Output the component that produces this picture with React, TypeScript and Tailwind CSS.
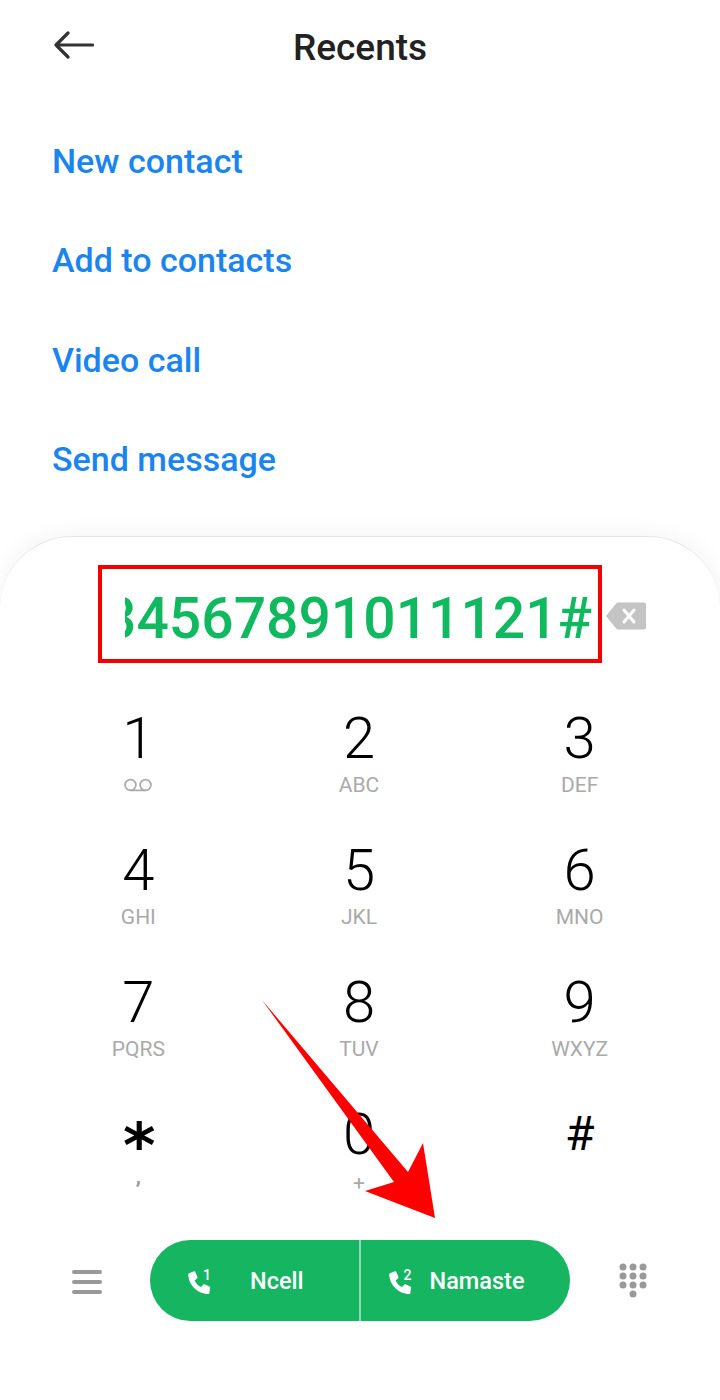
const actions = ["New contact", "Add to contacts", "Video call", "Send message"];

const keys = [
  { digit: "1", sub: "voicemail", digitClass: "", subClass: "" },
  { digit: "2", sub: "ABC", digitClass: "", subClass: "" },
  { digit: "3", sub: "DEF", digitClass: "", subClass: "" },
  { digit: "4", sub: "GHI", digitClass: "", subClass: "" },
  { digit: "5", sub: "JKL", digitClass: "", subClass: "" },
  { digit: "6", sub: "MNO", digitClass: "", subClass: "" },
  { digit: "7", sub: "PQRS", digitClass: "", subClass: "" },
  { digit: "8", sub: "TUV", digitClass: "", subClass: "" },
  { digit: "9", sub: "WXYZ", digitClass: "", subClass: "" },
  {
    digit: "*",
    sub: ",",
    digitClass: "!text-[62px] ![font-weight:700] font-['DejaVu_Sans',sans-serif] translate-y-[12px] translate-x-[1px]",
    subClass: "-translate-y-[5px] !font-bold !text-[#999]",
  },
  { digit: "0", sub: "+", digitClass: "", subClass: "translate-y-[2px]" },
  { digit: "#", sub: "", digitClass: "![font-weight:400] !text-[48px]", subClass: "" },
];

function PhoneIcon() {
  return (
    <svg viewBox="0 0 22 23" className="h-[23px] w-[22px]" fill="#fff">
      <path d="M1 2.200 6 .3c.5-.2 1 0 1.200.5l2.300 5.400c.2.4 0 .8-.3 1.100L6.600 9.400c1.300 3 3.500 5.300 6.500 6.600l2.200-2.500c.3-.3.7-.4 1.100-.3l5 2.300c.4.200.6.600.6 1l-.6 5.600c-.1.500-.5.900-1 .9C9.500 23 .3 13.500.3 3.200c0-.5.300-.8.700-1Z" />
    </svg>
  );
}

function SimButton({ sim, name, className }: { sim: string; name: string; className: string }) {
  return (
    <div className={`flex h-full items-center ${className}`}>
      <div className="relative mt-[4px] h-[23px] w-[22px]">
        <PhoneIcon />
        <span className="absolute -top-[3px] left-[15px] text-[14px] leading-[14px] text-white [font-weight:500]">{sim}</span>
      </div>
      <span className="mt-[2px] text-[23.500px] leading-none text-white [font-weight:550]">{name}</span>
    </div>
  );
}

function Voicemail() {
  return (
    <svg viewBox="0 0 28 14" className="h-[14px] w-[28px]" fill="none" stroke="#aaa" strokeWidth="1.700">
      <circle cx="6.500" cy="7" r="5.400" />
      <circle cx="21.500" cy="7" r="5.400" />
      <path d="M6.500 12.400h15" />
    </svg>
  );
}

export default function App() {
  return (
    <div className="relative flex h-[1400px] w-[720px] flex-col overflow-hidden bg-white font-['Roboto',sans-serif]">
      <header className="relative flex h-[94px] items-center justify-center">
        <svg viewBox="0 0 40 28" className="absolute left-[54px] top-[31px] h-[28px] w-[40px]" fill="none" stroke="#333" strokeWidth="3.200" strokeLinecap="round" strokeLinejoin="round">
          <path d="M38.500 14H2M14 2 2 14l12 12" />
        </svg>
        <h1 className="text-[37px] font-medium leading-none text-[#222]">Recents</h1>
      </header>

      <nav className="flex h-[442px] flex-col pl-[52px] pt-[18px]">
        {actions.map((label) => (
          <div key={label} className="flex h-[99.300px] items-center text-[34px] font-medium text-[#1a85ef]">
            {label}
          </div>
        ))}
      </nav>

      <section className="flex flex-1 flex-col rounded-t-[72px] border-t border-[#e4e4e4] bg-white shadow-[0_-2px_22px_rgba(0,0,0,0.05)]">
        <div className="mt-[28px] flex items-center">
          <div className="ml-[98px] flex h-[98px] w-[504px] items-center justify-end overflow-hidden border-[4px] border-[#f50000] pl-[23px] pr-[6px]">
            <div className="flex w-full justify-end overflow-hidden pt-[8px]">
              <span className="whitespace-nowrap text-[57px] leading-none text-[#10b95f] [font-weight:500]">1234567891011121#</span>
            </div>
          </div>
          <svg viewBox="0 0 40 28" className="ml-[4px] mt-[4px] h-[28px] w-[40px]">
            <path d="M11 .5h27a2 2 0 0 1 2 2v23a2 2 0 0 1-2 2H11L0 14Z" fill="#c4c4c4" />
            <path d="M18 8l10 12M28 8 18 20" stroke="#fff" strokeWidth="3" strokeLinecap="round" />
          </svg>
        </div>

        <div className="mt-[38px] grid grid-cols-3 pl-[28px] pr-[30px]">
          {keys.map((key) => (
            <div key={key.digit} className="flex h-[132px] flex-col items-center">
              <span className={`mt-[5px] h-[64px] text-[58px] leading-[64px] text-black [font-weight:350] ${key.digitClass}`}>{key.digit}</span>
              <span className={`mt-[3px] flex h-[24px] items-center text-[21px] leading-none text-[#aaa] ${key.subClass}`}>
                {key.sub === "voicemail" ? <Voicemail /> : key.sub}
              </span>
            </div>
          ))}
        </div>

        <div className="mt-[11px] flex items-center">
          <div className="ml-[72px] mt-[3px] flex w-[78px] flex-col gap-[6.500px]">
            <span className="h-[3.500px] w-[30px] rounded-full bg-[#999]" />
            <span className="h-[3.500px] w-[30px] rounded-full bg-[#999]" />
            <span className="h-[3.500px] w-[30px] rounded-full bg-[#999]" />
          </div>
          <div className="flex h-[81px] w-[420px] items-center rounded-full bg-[#16b562]">
            <SimButton sim="1" name="Ncell" className="w-[209px] gap-[40px] pl-[38px]" />
            <div className="h-full w-[1.500px] bg-[#8fdcb2]" />
            <SimButton sim="2" name="Namaste" className="flex-1 gap-[19px] pl-[28px]" />
          </div>
          <svg viewBox="0 0 28 36" className="ml-[49px] mt-[1px] h-[36px] w-[28px]" fill="#999">
            {[4, 14, 24].flatMap((cx) =>
              [4, 13, 22].map((cy) => <circle key={`${cx}-${cy}`} cx={cx} cy={cy} r="3.500" />),
            )}
            <circle cx="14" cy="31" r="3.500" />
          </svg>
        </div>
      </section>

      <svg viewBox="0 0 720 1400" className="pointer-events-none absolute inset-0 h-[1400px] w-[720px]">
        <path d="M262 1000 408 1172 423 1143 435 1218 365 1191 394 1182Z" fill="#fe0000" />
      </svg>
    </div>
  );
}
